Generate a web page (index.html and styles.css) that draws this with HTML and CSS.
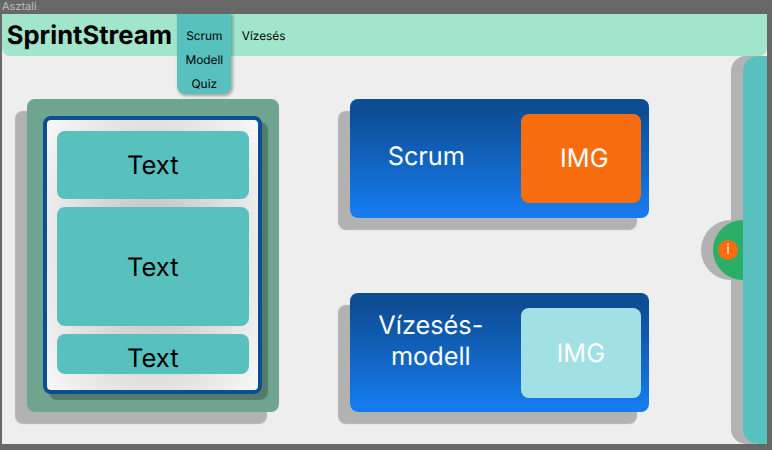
FILE: index.html
```html
<!DOCTYPE html>
<html lang="hu">
<head>
<meta charset="utf-8">
<title>SprintStream</title>
<link rel="stylesheet" href="styles.css">
</head>
<body>
<div class="frame-label">Asztali</div>
<div class="frame">
  <header class="header">
    <h1 class="brand">SprintStream</h1>
    <nav class="nav">
      <div class="menu">
        <a>Scrum</a>
        <a>Modell</a>
        <a>Quiz</a>
      </div>
      <a class="nav-link">Vízesés</a>
    </nav>
  </header>
  <div class="body">
    <main class="content">
      <section class="board">
        <div class="panel">
          <div class="tile">Text</div>
          <div class="tile tile-large">Text</div>
          <div class="tile tile-small">Text</div>
        </div>
      </section>
      <div class="cards">
        <article class="card">
          <h2 class="card-title title-scrum">Scrum</h2>
          <div class="thumb thumb-orange">IMG</div>
        </article>
        <article class="card">
          <h2 class="card-title title-model">Vízesés-<br>modell</h2>
          <div class="thumb thumb-aqua">IMG</div>
        </article>
      </div>
    </main>
    <aside class="drawer">
      <div class="handle"><span class="info">i</span></div>
    </aside>
  </div>
</div>
</body>
</html>
```
FILE: styles.css
```css
* { box-sizing: border-box; }
body {
  margin: 0;
  height: 450px;
  overflow: hidden;
  background: #676767;
  color: #000;
  font-family: Inter, "Liberation Sans", sans-serif;
  text-rendering: geometricPrecision;
}
h1, h2 { margin: 0; }
.frame-label {
  height: 14px;
  padding-left: 2px;
  font-size: 11px;
  line-height: 13px;
  color: #bdbdbd;
}
.frame {
  display: flex;
  flex-direction: column;
  width: 765.3px;
  height: 430.4px;
  margin-left: 1.7px;
  background: #eee;
  overflow: hidden;
}
.header {
  position: relative;
  z-index: 1;
  display: flex;
  flex: none;
  height: 42px;
  background: #a1e5cb;
  border-radius: 0 0 8px 8px;
}
.brand {
  width: 175.8px;
  padding-left: 5px;
  font-size: 25.6px;
  font-weight: 700;
  line-height: 44px;
  white-space: nowrap;
}
.nav {
  display: flex;
  align-items: flex-start;
  gap: 10.5px;
  font-size: 11.9px;
}
.menu {
  display: flex;
  flex-direction: column;
  align-items: center;
  width: 53.7px;
  height: 80px;
  padding-top: 10px;
  line-height: 23.8px;
  background: #59c1bd;
  border-radius: 0 0 8px 8px;
  box-shadow: 1.5px 1.5px 3px rgba(0, 0, 0, 0.3);
}
.nav-link { line-height: 43px; }
.body {
  display: flex;
  flex: 1;
  min-height: 0;
}
.content {
  display: flex;
  flex: 1;
  align-items: flex-start;
  gap: 71px;
  padding: 42.5px 0 0 25.2px;
}
.board {
  width: 251.8px;
  height: 313.8px;
  padding: 17.2px 16.5px;
  background: #6fa48f;
  border-radius: 8px;
  box-shadow: -12px 12px 1px rgba(0, 0, 0, 0.25);
}
.panel {
  display: flex;
  flex-direction: column;
  gap: 8.2px;
  height: 278.8px;
  padding: 11.5px 9.5px;
  border: 4px solid #0d4d94;
  border-radius: 8px;
  background: radial-gradient(ellipse 62% 75% at 50% 50%, #bcbcbc 0%, #f6f6f6 100%);
  box-shadow: 6px 6px 1px rgba(0, 0, 0, 0.25);
}
.tile {
  display: flex;
  flex: none;
  align-items: center;
  justify-content: center;
  height: 67.6px;
  padding-top: 2px;
  border-radius: 8px;
  background: #59c1bd;
  font-size: 25.5px;
}
.tile-large { height: 119.2px; }
.tile-small { height: 40px; padding-top: 8px; }
.cards {
  display: flex;
  flex-direction: column;
  gap: 74.4px;
  width: 299px;
}
.card {
  display: flex;
  height: 119.7px;
  padding: 15.2px 8px 0 0;
  border-radius: 8px;
  background: linear-gradient(#0d4d94 10%, #167bed 95%);
  box-shadow: -12px 12px 1px rgba(0, 0, 0, 0.25);
  color: #fff;
}
.card-title {
  flex: 1;
  font-size: 25.3px;
  font-weight: 400;
  line-height: 31px;
  text-align: center;
}
.title-scrum { padding: 27px 18px 0 0; }
.title-model { padding: 2px 9px 0 0; }
.thumb {
  display: flex;
  align-items: center;
  justify-content: center;
  width: 119.7px;
  height: 89.8px;
  border-radius: 8px;
  font-size: 25.3px;
}
.thumb-orange { padding-left: 7px; background: #f86d0f; }
.thumb-aqua { padding-top: 2px; background: #a1e0e4; }
.drawer {
  display: flex;
  align-items: center;
  justify-content: flex-end;
  width: 24px;
  background: #59c1bd;
  border-radius: 15px 0 0 15px;
  filter: drop-shadow(-12px 0 0.7px rgba(0, 0, 0, 0.25));
}
.handle {
  display: flex;
  flex: none;
  align-items: center;
  width: 30px;
  height: 60px;
  margin-right: 24px;
  padding-left: 5px;
  border-radius: 30px 0 0 30px;
  background: #2bae66;
}
.info {
  width: 20px;
  height: 20px;
  border-radius: 50%;
  background: #f86d0f;
  color: #f5dccb;
  font-size: 14px;
  font-weight: 500;
  line-height: 20px;
  text-align: center;
}
```
